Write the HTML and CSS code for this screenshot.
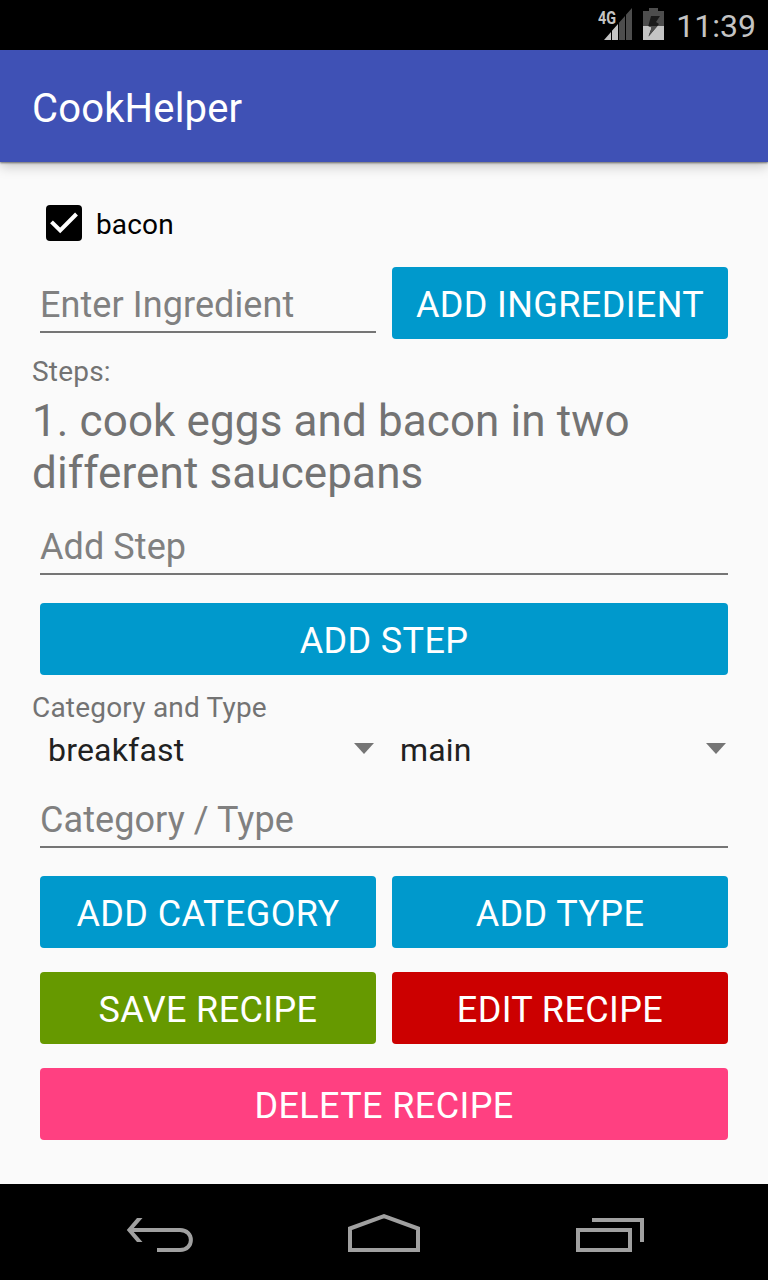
FILE: index.html
```html
<!DOCTYPE html>
<html lang="en"><head><meta charset="utf-8"><title>CookHelper</title><link rel="stylesheet" href="styles.css"></head>
<body>
<div class="status">
<svg class="signal" width="28" height="32" viewBox="0 0 28 32"><path d="M15 14.860L21 8v24h-6zM22 6.860L28 0v32h-6z" fill="#4d4d4d"/><path d="M0 32l7-8v8zM8 22.860L14 16v16H8z" fill="#c4c4c4"/></svg>
<span class="net">4G</span>
<svg class="battery" width="21" height="32" viewBox="0 0 21 32"><path d="M0 3h6V0h9v3h6v15H0z" fill="#4d4d4d"/><path d="M0 18h21v14H0z" fill="#c4c4c4"/><path d="M8 8h9l-4 6 3 2L5.500 28.500l3.200-9L5.300 18z" fill="#1a1a1a"/><path d="M5.300 18h9.200L5.500 28.500l3.200-9z" fill="#4d4d4d"/></svg>
<span class="clock">11:39</span>
</div>
<header class="bar"><h1>CookHelper</h1></header>
<main class="content">
<label class="check"><svg width="36" height="36" viewBox="0 0 36 36"><rect width="36" height="36" rx="4"/><path d="M5.500 16.800l8.700 8.700L30.500 9" fill="none" stroke="#fff" stroke-width="4"/></svg><span>bacon</span></label>
<div class="row ingredient"><div class="field"><span>Enter Ingredient</span></div><button class="blue"><span>ADD INGREDIENT</span></button></div>
<div class="label steps"><span>Steps:</span></div>
<p class="step"><span>1. cook eggs and bacon in two</span><br><span>different saucepans</span></p>
<div class="field add-step"><span>Add Step</span></div>
<button class="blue wide"><span>ADD STEP</span></button>
<div class="label cat"><span>Category and Type</span></div>
<div class="row selects"><div class="select"><span>breakfast</span><i></i></div><div class="select"><span>main</span><i></i></div></div>
<div class="field add-cat"><span>Category / Type</span></div>
<div class="row buttons"><button class="blue"><span>ADD CATEGORY</span></button><button class="blue"><span>ADD TYPE</span></button><button class="green"><span>SAVE RECIPE</span></button><button class="red"><span>EDIT RECIPE</span></button><button class="pink"><span>DELETE RECIPE</span></button></div>
</main>
<nav class="nav"><svg width="768" height="96" viewBox="0 0 768 96" fill="none" stroke="#a0a0a0" stroke-width="4"><path d="M131 46h49c14.500 0 14.500 20 0 20h-23"/><path d="M126.800 46L137 34h5.500L132 46l10.500 12H137z" fill="#a0a0a0" stroke="none"/><path d="M350 66V44.500l34-12.300 34 12.300V66z"/><path d="M578 46h52v20h-52zM592 36h50v22"/></svg></nav>
</body></html>
```

FILE: styles.css
```css
* { box-sizing: border-box; }
body { margin: 0; width: 768px; height: 1280px; display: flex; flex-direction: column; background: #fafafa; font-family: Roboto, sans-serif; overflow: hidden; }
.status { height: 50px; background: #000; display: flex; align-items: center; justify-content: flex-end; padding: 0 12px 0 0; position: relative; color: #c4c4c4; }
.signal, .battery { margin-bottom: 2px; }
.net { position: absolute; left: 598px; top: 8px; font: bold 18px/20px Roboto, sans-serif; transform: scaleX(.8); transform-origin: left; }
.battery { margin-left: 11px; margin-right: 12px; }
.clock { font-size: 32px; width: 80px; text-align: right; white-space: nowrap; padding-top: 1px; }
.bar { height: 112px; background: #3f51b5; box-shadow: 0 1px 2px rgba(0,0,0,.5), 0 4px 12px rgba(0,0,0,.22); padding: 0 32px; display: flex; align-items: center; }
h1 { margin: 4px 0 0; font-size: 40px; font-weight: 400; letter-spacing: .16px; color: #fff; }
.content { flex: 1; padding: 43px 40px 0; display: flex; flex-direction: column; }
.check { display: flex; height: 36px; padding-left: 6px; gap: 14px; align-items: center; font-size: 28px; letter-spacing: .15px; }
.check span { padding-top: 2px; }
.row { display: grid; grid-template-columns: 336px 336px; gap: 24px 16px; }
.ingredient { margin-top: 26px; }
.field { height: 66px; border-bottom: 2px solid #757575; font-size: 36px; line-height: 77px; letter-spacing: .08px; color: #808080; }
button { height: 72px; border: 0; border-radius: 4px; color: #fff; font: 36px/72px Roboto, sans-serif; letter-spacing: .38px; padding: 2px 0 0; }
.blue { background: #09c; }
.green { background: #690; }
.red { background: #c00; }
.pink { background: #ff4081; grid-column: span 2; }
.label { height: 38px; line-height: 38px; font-size: 28px; letter-spacing: .2px; color: #737373; margin-left: -8px; }
.steps { margin-top: 14px; }
.step { margin: 4px 0 0 -8px; color: #737373; font-size: 44px; line-height: 52px; height: 104px; letter-spacing: .11px; }
.add-step { margin-top: 10px; }
.wide { margin-top: 28px; }
.cat { margin-top: 14px; }
.selects { height: 48px; }
.select { height: 46px; font-size: 32px; line-height: 46px; letter-spacing: .2px; display: flex; align-items: center; justify-content: space-between; padding: 0 2px 0 8px; color: #212121; }
.select i { border: 10px solid transparent; border-top: 11px solid #757575; border-bottom: 0; margin-bottom: 3px; }
.add-cat { margin-top: 7px; }
.buttons { margin-top: 28px; }
.nav { height: 96px; background: #000; }
svg { display: block; flex: none; }
```
